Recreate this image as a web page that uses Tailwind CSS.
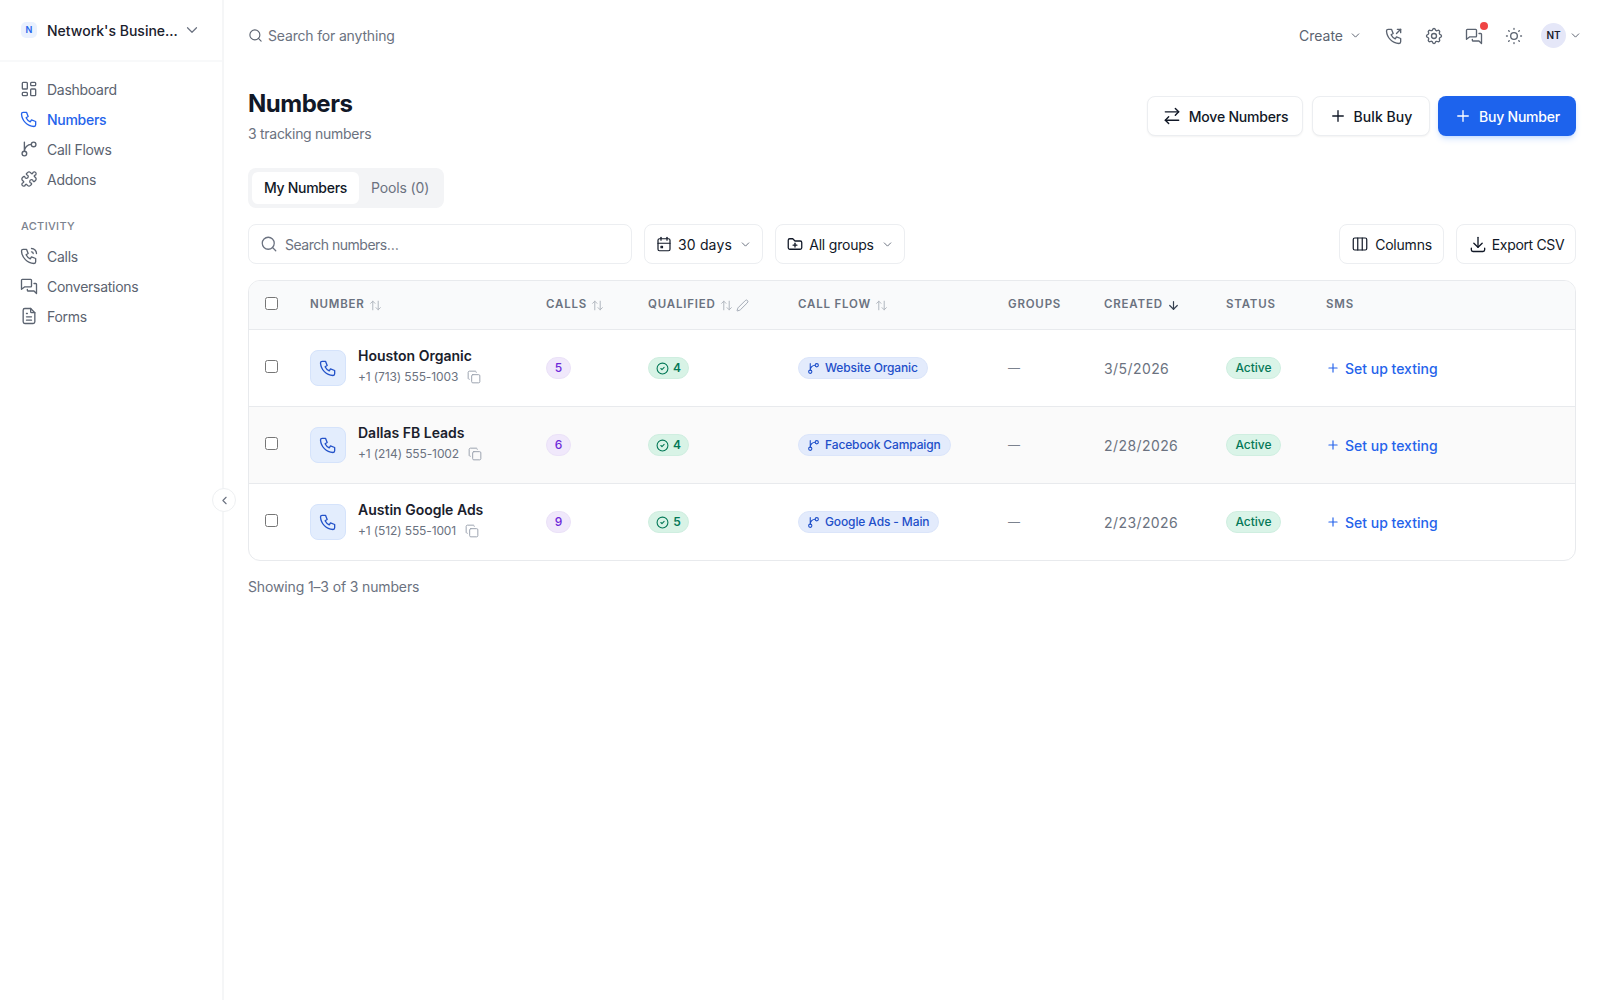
<!DOCTYPE html>
<html lang="en">
<head>
  <meta charset="UTF-8">
  <title>Numbers</title>
  <script src="https://cdn.jsdelivr.net/npm/@tailwindcss/browser@4"></script>
</head>
<body class="h-screen overflow-hidden bg-white font-['Inter',sans-serif] text-[#111827] flex">
  <!-- sidebar -->
  <aside class="relative w-[224px] shrink-0 border-r-2 border-[#f5f6f7] flex flex-col">
    <div class="h-[62px] flex items-center pl-[21px] border-b-2 border-[#f8f9fa]">
      <span class="w-[16px] h-[16px] rounded-[5px] bg-[#eaf1fe] text-[#2563eb] text-[9px] font-semibold flex items-center justify-center">N</span>
      <span class="ml-[10px] text-[14px] font-medium text-[#1a202c] w-[129px] whitespace-nowrap">Network's Busine...</span>
      <svg class="w-[18px] h-[18px] ml-[7px] text-[#6b7280]" fill="none" stroke="currentColor" stroke-width="1.6" stroke-linecap="round" stroke-linejoin="round" viewBox="0 0 24 24"><path d="m6 9 6 6 6-6"/></svg>
    </div>
    <nav class="pl-[19px] pt-[12px] flex flex-col text-[14px] tracking-[-0.02em] text-[#5b6370]">
      <a class="h-[30px] flex items-center gap-[8px]">
        <svg class="w-[20px] h-[20px]" fill="none" stroke="currentColor" stroke-width="1.6" stroke-linecap="round" stroke-linejoin="round" viewBox="0 0 24 24"><path d="M5 4h4a1 1 0 0 1 1 1v6a1 1 0 0 1-1 1H5a1 1 0 0 1-1-1V5a1 1 0 0 1 1-1"/><path d="M5 16h4a1 1 0 0 1 1 1v2a1 1 0 0 1-1 1H5a1 1 0 0 1-1-1v-2a1 1 0 0 1 1-1"/><path d="M15 12h4a1 1 0 0 1 1 1v6a1 1 0 0 1-1 1h-4a1 1 0 0 1-1-1v-6a1 1 0 0 1 1-1"/><path d="M15 4h4a1 1 0 0 1 1 1v2a1 1 0 0 1-1 1h-4a1 1 0 0 1-1-1V5a1 1 0 0 1 1-1"/></svg>
        Dashboard
      </a>
      <a class="h-[30px] flex items-center gap-[8px] text-[#2563eb] font-medium">
        <svg class="w-[20px] h-[20px]" fill="none" stroke="currentColor" stroke-width="1.6" stroke-linecap="round" stroke-linejoin="round" viewBox="0 0 24 24"><path d="M5 4h4l2 5-2.5 1.5a11 11 0 0 0 5 5L15 13l5 2v4a2 2 0 0 1-2 2A16 16 0 0 1 3 6a2 2 0 0 1 2-2"/></svg>
        Numbers
      </a>
      <a class="h-[30px] flex items-center gap-[8px]">
        <svg class="w-[20px] h-[20px]" fill="none" stroke="currentColor" stroke-width="1.8" stroke-linecap="round" stroke-linejoin="round" viewBox="-1 -1 26 26"><path d="M15 6a9 9 0 0 0-9 9V3"/><circle cx="18" cy="6" r="3"/><circle cx="6" cy="18" r="3"/></svg>
        Call Flows
      </a>
      <a class="h-[30px] flex items-center gap-[8px]">
        <svg class="w-[20px] h-[20px]" fill="none" stroke="currentColor" stroke-width="1.8" stroke-linecap="round" stroke-linejoin="round" viewBox="-2 -2 28 28"><path d="M15.39 4.39a1 1 0 0 0 1.68-.474 2.5 2.5 0 1 1 3.014 3.015 1 1 0 0 0-.474 1.68l1.683 1.682a2.414 2.414 0 0 1 0 3.414L19.61 15.39a1 1 0 0 1-1.68-.474 2.5 2.5 0 1 0-3.014 3.015 1 1 0 0 1 .474 1.68l-1.683 1.682a2.414 2.414 0 0 1-3.414 0L8.61 19.61a1 1 0 0 0-1.68.474 2.5 2.5 0 1 1-3.014-3.015 1 1 0 0 0 .474-1.68l-1.683-1.682a2.414 2.414 0 0 1 0-3.414L4.39 8.61a1 1 0 0 1 1.68.474 2.5 2.5 0 1 0 3.014-3.015 1 1 0 0 1-.474-1.68l1.683-1.682a2.414 2.414 0 0 1 3.414 0z"/></svg>
        Addons
      </a>
      <div class="mt-[25px] mb-[8px] ml-[2px] h-[14px] flex items-center text-[11px] font-medium tracking-[0.03em] text-[#7b828e]">ACTIVITY</div>
      <a class="h-[30px] flex items-center gap-[8px]">
        <svg class="w-[20px] h-[20px]" fill="none" stroke="currentColor" stroke-width="1.6" stroke-linecap="round" stroke-linejoin="round" viewBox="0 0 24 24"><path d="M5 4h4l2 5-2.5 1.5a11 11 0 0 0 5 5L15 13l5 2v4a2 2 0 0 1-2 2A16 16 0 0 1 3 6a2 2 0 0 1 2-2"/><path d="M15 7a2 2 0 0 1 2 2"/><path d="M15 3a6 6 0 0 1 6 6"/></svg>
        Calls
      </a>
      <a class="h-[30px] flex items-center gap-[8px]">
        <svg class="w-[20px] h-[20px]" fill="none" stroke="currentColor" stroke-width="1.6" stroke-linecap="round" stroke-linejoin="round" viewBox="0 0 24 24"><path d="M4 4h10a1 1 0 0 1 1 1v7a1 1 0 0 1-1 1H7l-4 3V5a1 1 0 0 1 1-1z"/><path d="M18 9h2a1 1 0 0 1 1 1v11l-3-3h-7a1 1 0 0 1-1-1v-1"/></svg>
        Conversations
      </a>
      <a class="h-[30px] flex items-center gap-[8px]">
        <svg class="w-[20px] h-[20px]" fill="none" stroke="currentColor" stroke-width="1.6" stroke-linecap="round" stroke-linejoin="round" viewBox="0 0 24 24"><path d="M14 3v4a1 1 0 0 0 1 1h4"/><path d="M17 21H7a2 2 0 0 1-2-2V5a2 2 0 0 1 2-2h7l5 5v11a2 2 0 0 1-2 2z"/><path d="M9 9h1"/><path d="M9 13h6"/><path d="M9 17h6"/></svg>
        Forms
      </a>
    </nav>
    <!-- collapse handle -->
    <button class="absolute top-[488px] right-[-14px] w-[24px] h-[24px] rounded-full bg-white border border-[#eef0f2] flex items-center justify-center text-[#6b7280]">
      <svg class="w-[13px] h-[13px]" fill="none" stroke="currentColor" stroke-width="2" stroke-linecap="round" stroke-linejoin="round" viewBox="0 0 24 24"><path d="m15 18-6-6 6-6"/></svg>
    </button>
  </aside>

  <main class="flex-1 min-w-0 pl-[24px] pr-[24px]">
    <!-- top bar -->
    <header class="h-[71px] flex items-center text-[#5b6370]">
      <svg class="w-[15px] h-[15px]" fill="none" stroke="currentColor" stroke-width="1.8" stroke-linecap="round" stroke-linejoin="round" viewBox="0 0 24 24"><circle cx="11" cy="11" r="8"/><path d="m21 21-4.3-4.3"/></svg>
      <span class="ml-[5px] text-[14px] tracking-[-0.012em] text-[#6b7280]">Search for anything</span>
      <div class="ml-auto mr-[-6px] flex items-center">
        <span class="text-[14px] text-[#5b6370]">Create</span>
        <svg class="w-[13px] h-[13px] ml-[6px]" fill="none" stroke="currentColor" stroke-width="1.8" stroke-linecap="round" stroke-linejoin="round" viewBox="0 0 24 24"><path d="m6 9 6 6 6-6"/></svg>
        <svg class="w-[20px] h-[20px] ml-[22px]" fill="none" stroke="currentColor" stroke-width="1.6" stroke-linecap="round" stroke-linejoin="round" viewBox="0 0 24 24"><path d="M5 4h4l2 5-2.5 1.5a11 11 0 0 0 5 5L15 13l5 2v4a2 2 0 0 1-2 2A16 16 0 0 1 3 6a2 2 0 0 1 2-2"/><path d="m15 9 5-5"/><path d="M16 4h4v4"/></svg>
        <svg class="w-[20px] h-[20px] ml-[20px]" fill="none" stroke="currentColor" stroke-width="1.6" stroke-linecap="round" stroke-linejoin="round" viewBox="0 0 24 24"><path d="M10.325 4.317c.426-1.756 2.924-1.756 3.35 0a1.724 1.724 0 0 0 2.573 1.066c1.543-.94 3.31.826 2.37 2.37a1.724 1.724 0 0 0 1.065 2.572c1.756.426 1.756 2.924 0 3.35a1.724 1.724 0 0 0-1.066 2.573c.94 1.543-.826 3.31-2.37 2.37a1.724 1.724 0 0 0-2.572 1.065c-.426 1.756-2.924 1.756-3.35 0a1.724 1.724 0 0 0-2.573-1.066c-1.543.94-3.31-.826-2.37-2.37a1.724 1.724 0 0 0-1.065-2.572c-1.756-.426-1.756-2.924 0-3.35a1.724 1.724 0 0 0 1.066-2.573c-.94-1.543.826-3.31 2.37-2.37 1 .608 2.296.07 2.572-1.065z"/><circle cx="12" cy="12" r="3"/></svg>
        <span class="relative ml-[20px]">
          <svg class="w-[20px] h-[20px]" fill="none" stroke="currentColor" stroke-width="1.6" stroke-linecap="round" stroke-linejoin="round" viewBox="0 0 24 24"><path d="M4 4h10a1 1 0 0 1 1 1v7a1 1 0 0 1-1 1H7l-4 3V5a1 1 0 0 1 1-1z"/><path d="M18 9h2a1 1 0 0 1 1 1v11l-3-3h-7a1 1 0 0 1-1-1v-1"/></svg>
          <span class="absolute top-[-4px] right-[-4px] w-[8px] h-[8px] rounded-full bg-[#ef4444]"></span>
        </span>
        <svg class="w-[20px] h-[20px] ml-[20px]" fill="none" stroke="currentColor" stroke-width="1.6" stroke-linecap="round" stroke-linejoin="round" viewBox="0 0 24 24"><circle cx="12" cy="12" r="4"/><path d="M3 12h1m8-9v1m8 8h1m-9 8v1M5.6 5.6l.7.7m12.1-.7-.7.7m0 11.4.7.7m-12.1-.7-.7.7"/></svg>
        <span class="ml-[17px] w-[25px] h-[25px] rounded-full bg-[#e5e7f8] text-[#1a202c] text-[10px] font-semibold flex items-center justify-center">NT</span>
        <svg class="w-[13px] h-[13px] ml-[3px]" fill="none" stroke="currentColor" stroke-width="1.8" stroke-linecap="round" stroke-linejoin="round" viewBox="0 0 24 24"><path d="m6 9 6 6 6-6"/></svg>
      </div>
    </header>

    <!-- title row -->
    <div class="flex items-start justify-between mt-[17px]">
      <div>
        <h1 class="text-[24px] leading-[32px] font-bold tracking-[-0.02em] text-[#111827]">Numbers</h1>
        <p class="mt-[4px] text-[14px] leading-[20px] tracking-[-0.02em] text-[#6b7280]">3 tracking numbers</p>
      </div>
      <div class="flex gap-[8.5px] mt-[8px] text-[14px] font-medium tracking-[-0.015em]">
        <button class="h-[40px] w-[156px] flex items-center justify-center gap-[7px] rounded-[8px] border border-[#eceef1] bg-white shadow-xs">
          <svg class="w-[20px] h-[20px]" fill="none" stroke="currentColor" stroke-width="1.7" stroke-linecap="round" stroke-linejoin="round" viewBox="0 0 24 24"><path d="m16 3 4 4-4 4"/><path d="M4 7h16"/><path d="m8 13-4 4 4 4"/><path d="M20 17H4"/></svg>
          Move Numbers
        </button>
        <button class="h-[40px] w-[118px] flex items-center justify-center gap-[7px] tracking-[0.005em] rounded-[8px] border border-[#eceef1] bg-white shadow-xs">
          <svg class="w-[18px] h-[18px]" fill="none" stroke="currentColor" stroke-width="1.8" stroke-linecap="round" stroke-linejoin="round" viewBox="0 0 24 24"><path d="M5 12h14"/><path d="M12 5v14"/></svg>
          Bulk Buy
        </button>
        <button class="h-[40px] w-[138px] flex items-center justify-center gap-[7px] rounded-[8px] bg-[#1d63ed] text-white shadow-md shadow-blue-500/20">
          <svg class="w-[18px] h-[18px]" fill="none" stroke="currentColor" stroke-width="1.8" stroke-linecap="round" stroke-linejoin="round" viewBox="0 0 24 24"><path d="M5 12h14"/><path d="M12 5v14"/></svg>
          Buy Number
        </button>
      </div>
    </div>

    <!-- tabs -->
    <div class="mt-[24px] w-[196px] h-[40px] p-[4px] rounded-[8px] bg-[#f3f4f6] flex items-center text-[14px] leading-[18px]">
      <span class="h-[32px] w-[107px] rounded-[6px] bg-white font-medium tracking-[-0.02em] flex items-center justify-center">My Numbers</span>
      <span class="ml-[12px] tracking-[-0.01em] text-[#6b7280]">Pools (0)</span>
    </div>

    <!-- filters -->
    <div class="mt-[16px] flex items-center gap-[12px] text-[14px] tracking-[-0.015em]">
      <div class="w-[384px] h-[40px] px-[11px] flex items-center gap-[7px] tracking-[-0.035em] rounded-[8px] border border-[#eceef1] text-[#6b7280] bg-white">
        <svg class="w-[18px] h-[18px]" fill="none" stroke="currentColor" stroke-width="1.7" stroke-linecap="round" stroke-linejoin="round" viewBox="0 0 24 24"><circle cx="11" cy="11" r="8"/><path d="m21 21-4.3-4.3"/></svg>
        Search numbers…
      </div>
      <button class="h-[40px] w-[119px] flex items-center justify-center gap-[5px] tracking-[0.01em] rounded-[8px] border border-[#eceef1] bg-white">
        <svg class="w-[18px] h-[18px]" fill="none" stroke="currentColor" stroke-width="1.6" stroke-linecap="round" stroke-linejoin="round" viewBox="0 0 24 24"><rect x="4" y="5" width="16" height="16" rx="2"/><path d="M16 3v4"/><path d="M8 3v4"/><path d="M4 11h16"/><path d="M8 15h2v2H8z"/></svg>
        30 days
        <svg class="w-[13px] h-[13px] ml-[2px] text-[#6b7280]" fill="none" stroke="currentColor" stroke-width="1.8" stroke-linecap="round" stroke-linejoin="round" viewBox="0 0 24 24"><path d="m6 9 6 6 6-6"/></svg>
      </button>
      <button class="h-[40px] w-[130px] flex items-center justify-center gap-[5px] rounded-[8px] border border-[#eceef1] bg-white">
        <svg class="w-[18px] h-[18px]" fill="none" stroke="currentColor" stroke-width="1.7" stroke-linecap="round" stroke-linejoin="round" viewBox="0 0 24 24"><path d="M12 19H5a2 2 0 0 1-2-2V7a2 2 0 0 1 2-2h4l3 3h7a2 2 0 0 1 2 2v7a2 2 0 0 1-2 2z"/><path d="M12 11v5"/><path d="M9.5 13.5h5"/></svg>
        All groups
        <svg class="w-[13px] h-[13px] ml-[2px] text-[#6b7280]" fill="none" stroke="currentColor" stroke-width="1.8" stroke-linecap="round" stroke-linejoin="round" viewBox="0 0 24 24"><path d="m6 9 6 6 6-6"/></svg>
      </button>
      <button class="ml-auto h-[40px] w-[105px] flex items-center justify-center gap-[6px] rounded-[8px] border border-[#eceef1] bg-white">
        <svg class="w-[18px] h-[18px]" fill="none" stroke="currentColor" stroke-width="1.6" stroke-linecap="round" stroke-linejoin="round" viewBox="0 0 24 24"><rect x="3" y="4" width="18" height="16" rx="2"/><path d="M9 4v16"/><path d="M15 4v16"/></svg>
        Columns
      </button>
      <button class="h-[40px] w-[120px] flex items-center justify-center gap-[4px] tracking-[-0.025em] rounded-[8px] border border-[#eceef1] bg-white">
        <svg class="w-[20px] h-[20px]" fill="none" stroke="currentColor" stroke-width="1.6" stroke-linecap="round" stroke-linejoin="round" viewBox="0 0 24 24"><path d="M4 17v2a2 2 0 0 0 2 2h12a2 2 0 0 0 2-2v-2"/><path d="m7 11 5 5 5-5"/><path d="M12 4v12"/></svg>
        Export CSV
      </button>
    </div>

    <!-- table -->
    <div class="mt-[16px] rounded-[12px] border border-[#e8eaed] overflow-hidden">
      <div class="h-[49px] bg-[#f9fafb] border-b border-[#e8eaed] grid grid-cols-[61px_236px_102px_150px_210px_96px_122px_100px_1fr] items-center text-[11.5px] font-semibold tracking-[0.07em] text-[#6b7280]">
        <div class="pl-[16px] flex"><input type="checkbox" class="mt-[-4px]"></div>
        <div class="flex items-center gap-[4px]">NUMBER <svg class="w-[13px] h-[13px] text-[#b0b5bd]" fill="none" stroke="currentColor" stroke-width="1.8" stroke-linecap="round" stroke-linejoin="round" viewBox="0 0 24 24"><path d="m21 16-4 4-4-4"/><path d="M17 20V4"/><path d="m3 8 4-4 4 4"/><path d="M7 4v16"/></svg></div>
        <div class="flex items-center gap-[4px]">CALLS <svg class="w-[13px] h-[13px] text-[#b0b5bd]" fill="none" stroke="currentColor" stroke-width="1.8" stroke-linecap="round" stroke-linejoin="round" viewBox="0 0 24 24"><path d="m21 16-4 4-4-4"/><path d="M17 20V4"/><path d="m3 8 4-4 4 4"/><path d="M7 4v16"/></svg></div>
        <div class="flex items-center gap-[4px]">QUALIFIED <svg class="w-[13px] h-[13px] text-[#b0b5bd]" fill="none" stroke="currentColor" stroke-width="1.8" stroke-linecap="round" stroke-linejoin="round" viewBox="0 0 24 24"><path d="m21 16-4 4-4-4"/><path d="M17 20V4"/><path d="m3 8 4-4 4 4"/><path d="M7 4v16"/></svg><svg class="w-[13px] h-[13px] text-[#9ca3af] ml-[-1px]" fill="none" stroke="currentColor" stroke-width="1.7" stroke-linecap="round" stroke-linejoin="round" viewBox="0 0 24 24"><path d="M21.17 6.81a1 1 0 0 0-3.99-3.99L3.84 16.17a2 2 0 0 0-.5.83l-1.32 4.35a.5.5 0 0 0 .62.62l4.35-1.32a2 2 0 0 0 .83-.5z"/></svg></div>
        <div class="flex items-center gap-[4px]">CALL FLOW <svg class="w-[13px] h-[13px] text-[#b0b5bd]" fill="none" stroke="currentColor" stroke-width="1.8" stroke-linecap="round" stroke-linejoin="round" viewBox="0 0 24 24"><path d="m21 16-4 4-4-4"/><path d="M17 20V4"/><path d="m3 8 4-4 4 4"/><path d="M7 4v16"/></svg></div>
        <div>GROUPS</div>
        <div class="flex items-center gap-[4px]">CREATED <svg class="w-[13px] h-[13px] text-[#374151]" fill="none" stroke="currentColor" stroke-width="2.2" stroke-linecap="round" stroke-linejoin="round" viewBox="0 0 24 24"><path d="M12 5v14"/><path d="m19 12-7 7-7-7"/></svg></div>
        <div>STATUS</div>
        <div>SMS</div>
      </div>

      <div class="h-[77px] border-b border-[#e8eaed] grid grid-cols-[61px_236px_102px_150px_210px_96px_122px_100px_1fr] items-center">
        <div class="pl-[16px] flex"><input type="checkbox" class="mt-[-3px]"></div>
        <div class="flex items-center gap-[12px]">
          <span class="w-[36px] h-[36px] rounded-[8px] bg-[#e3edfd] border border-[#d5e3fb] flex items-center justify-center text-[#2453c9]"><svg class="w-[20px] h-[20px]" fill="none" stroke="currentColor" stroke-width="1.6" stroke-linecap="round" stroke-linejoin="round" viewBox="0 0 24 24"><path d="M5 4h4l2 5-2.5 1.5a11 11 0 0 0 5 5L15 13l5 2v4a2 2 0 0 1-2 2A16 16 0 0 1 3 6a2 2 0 0 1 2-2"/></svg></span>
          <div class="mb-[5px]">
            <div class="text-[14px] leading-[20px] font-semibold text-[#1a202c]">Houston Organic</div>
            <div class="mt-[3px] flex items-center gap-[9px] text-[12px] leading-[16px] tracking-[-0.01em] text-[#6b7280]">+1 (713) 555-1003 <svg class="w-[14px] h-[14px] text-[#9ca3af]" fill="none" stroke="currentColor" stroke-width="1.7" stroke-linecap="round" stroke-linejoin="round" viewBox="0 0 24 24"><rect x="8" y="8" width="14" height="14" rx="2"/><path d="M4 16c-1.1 0-2-.9-2-2V4c0-1.1.9-2 2-2h10c1.1 0 2 .9 2 2"/></svg></div>
          </div>
        </div>
        <div class="flex"><span class="flex w-[25px] h-[22px] rounded-full bg-[#f0e8fb] border border-[#ebe2f8] text-[12px] font-medium text-[#6d28d9] items-center justify-center">5</span></div>
        <div class="flex"><span class="flex h-[22px] w-[41px] gap-[4px] rounded-full bg-[#d8f3e6] border border-[#cfeee0] text-[12px] font-semibold text-[#047857] items-center justify-center"><svg class="w-[13px] h-[13px]" fill="none" stroke="currentColor" stroke-width="2" stroke-linecap="round" stroke-linejoin="round" viewBox="0 0 24 24"><circle cx="12" cy="12" r="10"/><path d="m9 12 2 2 4-4"/></svg>4</span></div>
        <div class="flex"><span class="flex h-[22px] pl-[8px] pr-[9px] gap-[5px] rounded-full bg-[#e3ebfc] border border-[#dbe5fa] text-[12px] font-medium tracking-[-0.01em] text-[#1e4fc9] items-center"><svg class="w-[13px] h-[13px]" fill="none" stroke="currentColor" stroke-width="2" stroke-linecap="round" stroke-linejoin="round" viewBox="0 0 24 24"><path d="M15 6a9 9 0 0 0-9 9V3"/><circle cx="18" cy="6" r="3"/><circle cx="6" cy="18" r="3"/></svg>Website Organic</span></div>
        <div class="text-[12px] text-[#7b828e]">—</div>
        <div class="text-[14px] tracking-[0.03em] text-[#6b7280]">3/5/2026</div>
        <div class="flex"><span class="flex h-[22px] w-[55px] rounded-full bg-[#daf4e8] border border-[#cfeee0] text-[12px] font-medium text-[#047857] items-center justify-center">Active</span></div>
        <div class="flex items-center gap-[5px] text-[14px] font-medium text-[#2563eb]"><svg class="w-[14px] h-[14px]" fill="none" stroke="currentColor" stroke-width="2" stroke-linecap="round" stroke-linejoin="round" viewBox="0 0 24 24"><path d="M5 12h14"/><path d="M12 5v14"/></svg>Set up texting</div>
      </div>

      <div class="h-[77px] border-b border-[#e8eaed] bg-[#fafafa] grid grid-cols-[61px_236px_102px_150px_210px_96px_122px_100px_1fr] items-center">
        <div class="pl-[16px] flex"><input type="checkbox" class="mt-[-3px]"></div>
        <div class="flex items-center gap-[12px]">
          <span class="w-[36px] h-[36px] rounded-[8px] bg-[#e3edfd] border border-[#d5e3fb] flex items-center justify-center text-[#2453c9]"><svg class="w-[20px] h-[20px]" fill="none" stroke="currentColor" stroke-width="1.6" stroke-linecap="round" stroke-linejoin="round" viewBox="0 0 24 24"><path d="M5 4h4l2 5-2.5 1.5a11 11 0 0 0 5 5L15 13l5 2v4a2 2 0 0 1-2 2A16 16 0 0 1 3 6a2 2 0 0 1 2-2"/></svg></span>
          <div class="mb-[5px]">
            <div class="text-[14px] leading-[20px] font-semibold text-[#1a202c]">Dallas FB Leads</div>
            <div class="mt-[3px] flex items-center gap-[9px] text-[12px] leading-[16px] tracking-[-0.01em] text-[#6b7280]">+1 (214) 555-1002 <svg class="w-[14px] h-[14px] text-[#9ca3af]" fill="none" stroke="currentColor" stroke-width="1.7" stroke-linecap="round" stroke-linejoin="round" viewBox="0 0 24 24"><rect x="8" y="8" width="14" height="14" rx="2"/><path d="M4 16c-1.1 0-2-.9-2-2V4c0-1.1.9-2 2-2h10c1.1 0 2 .9 2 2"/></svg></div>
          </div>
        </div>
        <div class="flex"><span class="flex w-[25px] h-[22px] rounded-full bg-[#f0e8fb] border border-[#ebe2f8] text-[12px] font-medium text-[#6d28d9] items-center justify-center">6</span></div>
        <div class="flex"><span class="flex h-[22px] w-[41px] gap-[4px] rounded-full bg-[#d8f3e6] border border-[#cfeee0] text-[12px] font-semibold text-[#047857] items-center justify-center"><svg class="w-[13px] h-[13px]" fill="none" stroke="currentColor" stroke-width="2" stroke-linecap="round" stroke-linejoin="round" viewBox="0 0 24 24"><circle cx="12" cy="12" r="10"/><path d="m9 12 2 2 4-4"/></svg>4</span></div>
        <div class="flex"><span class="flex h-[22px] pl-[8px] pr-[9px] gap-[5px] rounded-full bg-[#e3ebfc] border border-[#dbe5fa] text-[12px] font-medium tracking-[-0.01em] text-[#1e4fc9] items-center"><svg class="w-[13px] h-[13px]" fill="none" stroke="currentColor" stroke-width="2" stroke-linecap="round" stroke-linejoin="round" viewBox="0 0 24 24"><path d="M15 6a9 9 0 0 0-9 9V3"/><circle cx="18" cy="6" r="3"/><circle cx="6" cy="18" r="3"/></svg>Facebook Campaign</span></div>
        <div class="text-[12px] text-[#7b828e]">—</div>
        <div class="text-[14px] tracking-[0.03em] text-[#6b7280]">2/28/2026</div>
        <div class="flex"><span class="flex h-[22px] w-[55px] rounded-full bg-[#daf4e8] border border-[#cfeee0] text-[12px] font-medium text-[#047857] items-center justify-center">Active</span></div>
        <div class="flex items-center gap-[5px] text-[14px] font-medium text-[#2563eb]"><svg class="w-[14px] h-[14px]" fill="none" stroke="currentColor" stroke-width="2" stroke-linecap="round" stroke-linejoin="round" viewBox="0 0 24 24"><path d="M5 12h14"/><path d="M12 5v14"/></svg>Set up texting</div>
      </div>

      <div class="h-[76px] grid grid-cols-[61px_236px_102px_150px_210px_96px_122px_100px_1fr] items-center">
        <div class="pl-[16px] flex"><input type="checkbox" class="mt-[-3px]"></div>
        <div class="flex items-center gap-[12px]">
          <span class="w-[36px] h-[36px] rounded-[8px] bg-[#e3edfd] border border-[#d5e3fb] flex items-center justify-center text-[#2453c9]"><svg class="w-[20px] h-[20px]" fill="none" stroke="currentColor" stroke-width="1.6" stroke-linecap="round" stroke-linejoin="round" viewBox="0 0 24 24"><path d="M5 4h4l2 5-2.5 1.5a11 11 0 0 0 5 5L15 13l5 2v4a2 2 0 0 1-2 2A16 16 0 0 1 3 6a2 2 0 0 1 2-2"/></svg></span>
          <div class="mb-[5px]">
            <div class="text-[14px] leading-[20px] font-semibold text-[#1a202c]">Austin Google Ads</div>
            <div class="mt-[3px] flex items-center gap-[9px] text-[12px] leading-[16px] tracking-[-0.01em] text-[#6b7280]">+1 (512) 555-1001 <svg class="w-[14px] h-[14px] text-[#9ca3af]" fill="none" stroke="currentColor" stroke-width="1.7" stroke-linecap="round" stroke-linejoin="round" viewBox="0 0 24 24"><rect x="8" y="8" width="14" height="14" rx="2"/><path d="M4 16c-1.1 0-2-.9-2-2V4c0-1.1.9-2 2-2h10c1.1 0 2 .9 2 2"/></svg></div>
          </div>
        </div>
        <div class="flex"><span class="flex w-[25px] h-[22px] rounded-full bg-[#f0e8fb] border border-[#ebe2f8] text-[12px] font-medium text-[#6d28d9] items-center justify-center">9</span></div>
        <div class="flex"><span class="flex h-[22px] w-[41px] gap-[4px] rounded-full bg-[#d8f3e6] border border-[#cfeee0] text-[12px] font-semibold text-[#047857] items-center justify-center"><svg class="w-[13px] h-[13px]" fill="none" stroke="currentColor" stroke-width="2" stroke-linecap="round" stroke-linejoin="round" viewBox="0 0 24 24"><circle cx="12" cy="12" r="10"/><path d="m9 12 2 2 4-4"/></svg>5</span></div>
        <div class="flex"><span class="flex h-[22px] pl-[8px] pr-[9px] gap-[5px] rounded-full bg-[#e3ebfc] border border-[#dbe5fa] text-[12px] font-medium tracking-[-0.01em] text-[#1e4fc9] items-center"><svg class="w-[13px] h-[13px]" fill="none" stroke="currentColor" stroke-width="2" stroke-linecap="round" stroke-linejoin="round" viewBox="0 0 24 24"><path d="M15 6a9 9 0 0 0-9 9V3"/><circle cx="18" cy="6" r="3"/><circle cx="6" cy="18" r="3"/></svg>Google Ads - Main</span></div>
        <div class="text-[12px] text-[#7b828e]">—</div>
        <div class="text-[14px] tracking-[0.03em] text-[#6b7280]">2/23/2026</div>
        <div class="flex"><span class="flex h-[22px] w-[55px] rounded-full bg-[#daf4e8] border border-[#cfeee0] text-[12px] font-medium text-[#047857] items-center justify-center">Active</span></div>
        <div class="flex items-center gap-[5px] text-[14px] font-medium text-[#2563eb]"><svg class="w-[14px] h-[14px]" fill="none" stroke="currentColor" stroke-width="2" stroke-linecap="round" stroke-linejoin="round" viewBox="0 0 24 24"><path d="M5 12h14"/><path d="M12 5v14"/></svg>Set up texting</div>
      </div>
    </div>

    <p class="mt-[16px] text-[14px] leading-[20px] tracking-[-0.01em] text-[#6b7280]">Showing 1–3 of 3 numbers</p>
  </main>
</body>
</html>
